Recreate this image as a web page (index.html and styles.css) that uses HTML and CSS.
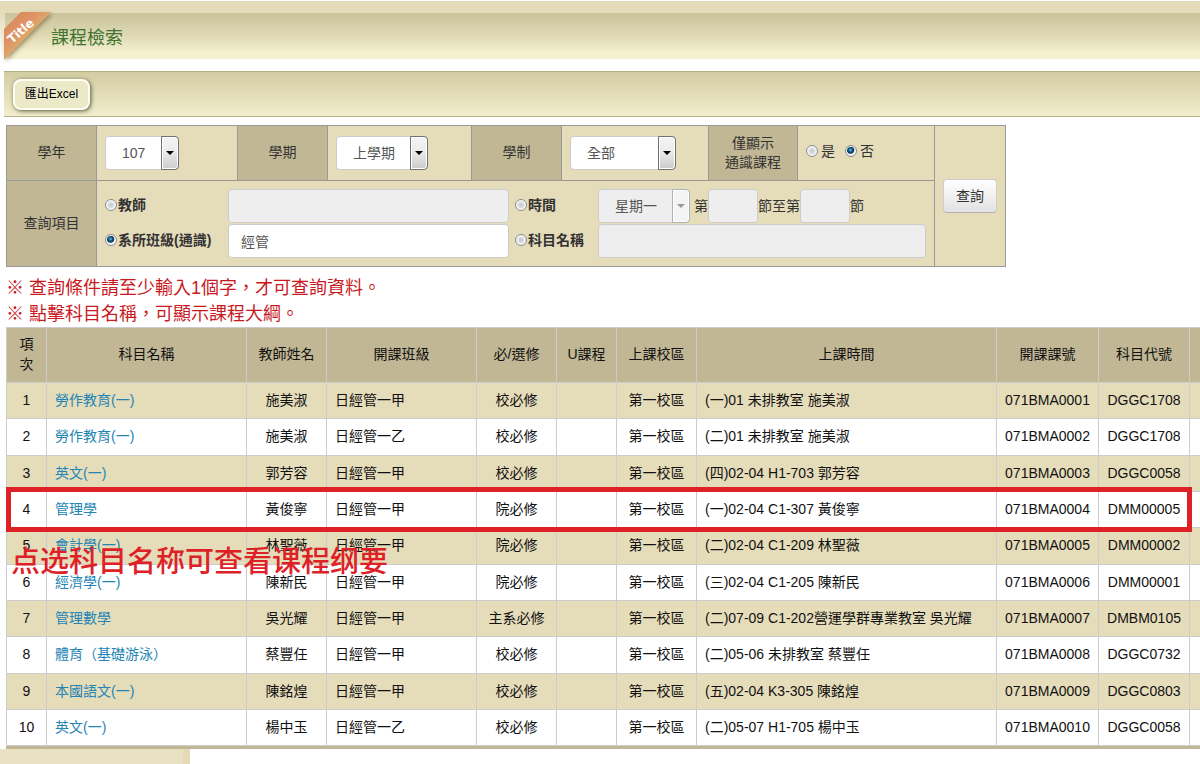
FILE: index.html
```html
<!DOCTYPE html>
<html lang="zh-TW">
<head>
<meta charset="utf-8">
<title>課程檢索</title>
<link rel="stylesheet" href="styles.css">
</head>
<body>
<header class="page-top">
  <div class="title-bar">
    <svg class="ribbon" width="50" height="52" viewBox="0 0 50 52" aria-hidden="true">
      <defs>
        <linearGradient id="rib" x1="0" y1="0" x2="1" y2="1">
          <stop offset="0" stop-color="#d98558"/>
          <stop offset=".36" stop-color="#de9366"/>
          <stop offset=".5" stop-color="#dda86a"/>
        </linearGradient>
        <filter id="sh" x="-20%" y="-20%" width="150%" height="150%"><feGaussianBlur stdDeviation="2"/></filter>
      </defs>
      <path d="M2 50 L49 3 L22 3 L2 22Z" fill="#7d7048" opacity=".7" filter="url(#sh)"/>
      <path d="M0 18 L17 1 L47 1 L0 49Z" fill="url(#rib)"/>
      <text class="ribbon-text" transform="translate(8 33) rotate(-41)">Title</text>
    </svg>
    <h1 class="title">課程檢索</h1>
  </div>
</header>

<div class="toolbar"><button type="button" class="export">匯出Excel</button></div>

<main class="content">
  <form class="search">
    <table class="filters">
      <colgroup>
        <col class="w-label"><col class="w-year"><col class="w-label"><col class="w-term"><col class="w-label"><col class="w-system"><col class="w-flag"><col class="w-general"><col class="w-submit">
      </colgroup>
      <tr class="filters-first">
        <th><label for="year">學年</label></th>
        <td><span class="select year"><select id="year"><option>107</option></select><i></i></span></td>
        <th><label for="term">學期</label></th>
        <td><span class="select term"><select id="term"><option>上學期</option></select><i></i></span></td>
        <th><label for="system">學制</label></th>
        <td><span class="select system"><select id="system"><option>全部</option></select><i></i></span></td>
        <th>僅顯示<br>通識課程</th>
        <td>
          <div class="yesno">
            <label><input type="radio" name="general">是</label>
            <label><input type="radio" name="general" checked>否</label>
          </div>
        </td>
        <td rowspan="2" class="submit-cell"><button type="button" class="submit">查詢</button></td>
      </tr>
      <tr class="filters-second">
        <th>查詢項目</th>
        <td colspan="7">
          <div class="criteria">
            <label class="opt"><input type="radio" name="by">教師</label>
            <input class="text" type="text" aria-label="教師" disabled>
            <label class="opt"><input type="radio" name="by">時間</label>
            <div class="time">
              <span class="select day"><select aria-label="星期" disabled><option>星期一</option></select><i></i></span>
              <label for="p1">第</label><input id="p1" class="text period" type="text" disabled>
              <label for="p2">節至第</label><input id="p2" class="text period" type="text" disabled><span>節</span>
            </div>
            <label class="opt"><input type="radio" name="by" checked>系所班級(通識)</label>
            <input class="text" type="text" aria-label="系所班級(通識)" value="經管">
            <label class="opt"><input type="radio" name="by">科目名稱</label>
            <input class="text" type="text" aria-label="科目名稱" disabled>
          </div>
        </td>
      </tr>
    </table>
  </form>

  <p class="notes">※ 查詢條件請至少輸入1個字，才可查詢資料。<br>※ 點擊科目名稱，可顯示課程大綱。</p>

  <div class="results">
    <table class="courses">
      <colgroup>
        <col class="c-no"><col class="c-subject"><col class="c-teacher"><col class="c-class"><col class="c-teacher"><col class="c-u"><col class="c-teacher"><col class="c-time"><col class="c-code"><col class="c-id"><col>
      </colgroup>
      <thead>
        <tr><th>項次</th><th>科目名稱</th><th>教師姓名</th><th>開課班級</th><th>必/選修</th><th>U課程</th><th>上課校區</th><th>上課時間</th><th>開課課號</th><th>科目代號</th><th></th></tr>
      </thead>
      <tbody>
        <tr><td>1</td><td><a href="#">勞作教育(一)</a></td><td>施美淑</td><td>日經管一甲</td><td>校必修</td><td></td><td>第一校區</td><td>(一)01 未排教室 施美淑</td><td>071BMA0001</td><td>DGGC1708</td><td></td></tr>
        <tr><td>2</td><td><a href="#">勞作教育(一)</a></td><td>施美淑</td><td>日經管一乙</td><td>校必修</td><td></td><td>第一校區</td><td>(二)01 未排教室 施美淑</td><td>071BMA0002</td><td>DGGC1708</td><td></td></tr>
        <tr><td>3</td><td><a href="#">英文(一)</a></td><td>郭芳容</td><td>日經管一甲</td><td>校必修</td><td></td><td>第一校區</td><td>(四)02-04 H1-703 郭芳容</td><td>071BMA0003</td><td>DGGC0058</td><td></td></tr>
        <tr><td>4</td><td><a href="#">管理學</a></td><td>黃俊寧</td><td>日經管一甲</td><td>院必修</td><td></td><td>第一校區</td><td>(一)02-04 C1-307 黃俊寧</td><td>071BMA0004</td><td>DMM00005</td><td></td></tr>
        <tr><td>5</td><td><a href="#">會計學(一)</a></td><td>林聖薇</td><td>日經管一甲</td><td>院必修</td><td></td><td>第一校區</td><td>(二)02-04 C1-209 林聖薇</td><td>071BMA0005</td><td>DMM00002</td><td></td></tr>
        <tr><td>6</td><td><a href="#">經濟學(一)</a></td><td>陳新民</td><td>日經管一甲</td><td>院必修</td><td></td><td>第一校區</td><td>(三)02-04 C1-205 陳新民</td><td>071BMA0006</td><td>DMM00001</td><td></td></tr>
        <tr><td>7</td><td><a href="#">管理數學</a></td><td>吳光耀</td><td>日經管一甲</td><td>主系必修</td><td></td><td>第一校區</td><td>(二)07-09 C1-202營運學群專業教室 吳光耀</td><td>071BMA0007</td><td>DMBM0105</td><td></td></tr>
        <tr><td>8</td><td><a href="#">體育（基礎游泳）</a></td><td>蔡豐任</td><td>日經管一甲</td><td>校必修</td><td></td><td>第一校區</td><td>(二)05-06 未排教室 蔡豐任</td><td>071BMA0008</td><td>DGGC0732</td><td></td></tr>
        <tr><td>9</td><td><a href="#">本國語文(一)</a></td><td>陳銘煌</td><td>日經管一甲</td><td>校必修</td><td></td><td>第一校區</td><td>(五)02-04 K3-305 陳銘煌</td><td>071BMA0009</td><td>DGGC0803</td><td></td></tr>
        <tr><td>10</td><td><a href="#">英文(一)</a></td><td>楊中玉</td><td>日經管一乙</td><td>校必修</td><td></td><td>第一校區</td><td>(二)05-07 H1-705 楊中玉</td><td>071BMA0010</td><td>DGGC0058</td><td></td></tr>
      </tbody>
    </table>
    <div class="mark"></div>
    <p class="callout" lang="zh-CN">点选科目名称可查看课程纲要</p>
  </div>
</main>
<div class="page-tab"></div>
</body>
</html>
```
FILE: styles.css
```css
* { box-sizing: border-box; }
body {
  margin: 0;
  overflow: hidden;
  background: #fff;
  color: #333;
  font: 14px/20px "Liberation Sans", "Noto Sans CJK TC", sans-serif;
}
input, select, button { font: inherit; color: inherit; margin: 0; }

.page-top {
  padding: 12px 0 0 5px;
  border-top: 1px solid #fff;
  background: linear-gradient(#e4dbba 0, #e4dbba 12px, #fff 54px);
}
.title-bar {
  position: relative;
  height: 46px;
  display: flex;
  align-items: center;
  padding: 3px 0 0 46px;
  background: linear-gradient(#c9c39c, #dfdab4 50%, #f4f0d0 85%, #f4f0d0);
}
.ribbon { position: absolute; left: -1px; top: -2px; overflow: visible; }
.ribbon-text { font: bold 12px "DejaVu Sans", sans-serif; fill: #fff; }
.title { margin: 0; font-size: 18px; line-height: 24px; font-weight: 400; color: #3f7430; }

.toolbar {
  height: 46px;
  margin: 12px 0 0 4px;
  padding: 7px 9px;
  border-top: 1px solid #b3ad83;
  border-bottom: 1px solid #b9b38a;
  background: linear-gradient(#d3cda4, #f2eecc);
}
.export {
  display: block;
  width: 77px;
  height: 31px;
  padding: 0 0 2px;
  font-size: 12px;
  color: #000;
  border: 2px solid #fffef2;
  border-radius: 8px;
  background: #ece9c9;
  box-shadow: 1px 1px 4px #55553a;
}

.content { padding: 8px 0 0 6px; }
.filters { width: 1000px; table-layout: fixed; border-collapse: collapse; background: #e5dcba; }
.filters th, .filters td { border: 1px solid #999; padding: 0 8px; }
.filters th { background: #c1b794; font-weight: 400; padding: 0 0 1px; line-height: 19px; }
.filters-first { height: 55px; }
.filters-second { height: 86px; }
.w-label { width: 90px; }
.w-year { width: 141px; }
.w-term { width: 144px; }
.w-system { width: 147px; }
.w-flag { width: 89px; }
.w-general { width: 137px; }

.select { position: relative; display: inline-block; height: 34px; vertical-align: middle; }
.select select {
  appearance: none;
  width: 100%;
  height: 34px;
  padding: 0 16px;
  border: 1px solid #ccc;
  border-radius: 4px;
  background: #fff;
  color: #555;
  opacity: 1;
}
.select i {
  position: absolute;
  right: 0;
  top: 0;
  bottom: 0;
  width: 18px;
  border: 1px solid #707070;
  border-radius: 0 4px 4px 0;
  background: linear-gradient(#f4f4f4, #ebebeb 45%, #ccc);
  box-shadow: inset 0 0 0 1px #fff;
  pointer-events: none;
}
.select i::after {
  content: "";
  position: absolute;
  left: 4px;
  top: 14px;
  border: 4px solid transparent;
  border-top-color: #000;
  border-bottom: 0;
}
.year { width: 74px; }
.term { width: 92px; }
.system { width: 106px; }
.day { width: 92px; margin-right: 4px; }
.day select { background: #eee; }
.day i { background: #f4f4f4; border-color: #adb2b5; }
.day i::after { border-top-color: #999; }

input[type="radio"] {
  appearance: none;
  flex: none;
  width: 12px;
  height: 12px;
  border: 1px solid #8a8d8f;
  border-radius: 50%;
  background: radial-gradient(#c9cccf 15%, #fff 75%);
  box-shadow: inset 0 0 0 1px #f4f4f4;
}
input[type="radio"]:checked {
  background: radial-gradient(circle at 45% 40%, #6cc6ea 0, #14618f 22%, #0c2e4c 40%, #f4f4f4 52%);
}
.yesno { display: flex; gap: 10px; padding-bottom: 4px; }
.yesno label { display: flex; align-items: center; gap: 3px; }

.criteria {
  display: grid;
  grid-template-columns: 123px 281px 89px 328px;
  grid-auto-rows: 34px;
  row-gap: 1px;
  align-items: center;
}
.opt { display: flex; align-items: center; gap: 1px; padding-bottom: 3px; font-weight: 700; }
.opt + .text + .opt { padding-left: 6px; }
.text {
  width: 100%;
  height: 34px;
  padding: 0 12px;
  border: 1px solid #ccc;
  border-radius: 4px;
  background: #fff;
  color: #555;
}
.text:disabled { background: #eee; }
.time { display: flex; align-items: center; }
.period { width: 50px; }
.submit-cell { text-align: center; }
.submit {
  width: 54px;
  height: 34px;
  padding: 0;
  border: 1px solid #ccc;
  border-bottom-color: #b3b3b3;
  border-radius: 4px;
  background: linear-gradient(#fff, #e2e2e2);
}

.notes { margin: 8px 0 0; font-size: 18px; line-height: 26px; color: #c9191e; }

.results { position: relative; border-bottom: 3px solid #c1b794; }
.courses {
  width: 100%;
  table-layout: fixed;
  border-collapse: collapse;
  color: #111;
}
.courses th, .courses td { border: 1px solid #ccc; padding: 0 8px 2px; text-align: center; white-space: nowrap; }
.courses th { height: 55px; font-weight: 400; background: #c1b794; white-space: normal; }
.courses th:last-child, .courses td:last-child { padding: 0; border-right: 0; }
.courses td { height: 36px; }
.courses tr:nth-child(3n+2) td { height: 37px; }
.courses tbody tr:nth-child(odd) { background: #e5dcba; }
.courses td:nth-child(2), .courses td:nth-child(4), .courses td:nth-child(8) { text-align: left; }
.courses a { color: #2384b5; text-decoration: none; }
.c-no { width: 40px; }
.c-subject { width: 200px; }
.c-teacher { width: 80px; }
.c-class { width: 150px; }
.c-u { width: 60px; }
.c-time { width: 300px; }
.c-code { width: 102px; }
.c-id { width: 91px; }

.mark { position: absolute; left: 0; right: 8px; top: 160px; height: 45px; border: 5px solid #de2127; }
.callout {
  position: absolute;
  left: 5px;
  top: 212px;
  margin: 0;
  font: 500 29px/40px "Noto Sans CJK SC", sans-serif;
  color: #de2127;
  white-space: nowrap;
}
.page-tab { width: 190px; height: 16px; background: #e8e2c3; border-right: 7px solid #e4dab8; }
```
